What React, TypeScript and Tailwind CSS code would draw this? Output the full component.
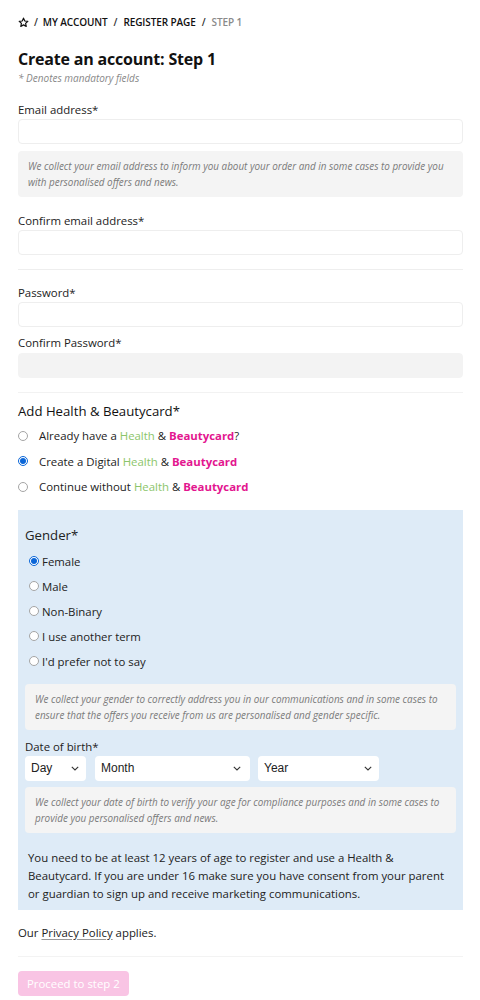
import React from "react";

const Star = () => (
  <svg width="11" height="11" viewBox="0 0 24 24" fill="none" stroke="#111" strokeWidth="2.6" strokeLinejoin="round">
    <path d="M12 2.5l2.9 6.2 6.6.7-4.9 4.5 1.4 6.6L12 17.2l-5.9 3.3 1.4-6.6-4.9-4.5 6.6-.7z" />
  </svg>
);

const Chevron = () => (
  <svg width="8" height="5" viewBox="0 0 8 5" fill="none" stroke="#333" strokeWidth="1.1">
    <path d="M0.8 0.8L4 4L7.2 0.8" />
  </svg>
);

const Info = ({ children, cls = "" }: { children: React.ReactNode; cls?: string }) => (
  <div className={`bg-[#f4f4f4] rounded-sm pl-[10px] pr-[8px] pt-[7px] pb-[7px] text-[9.9px] leading-[16px] italic text-[#7a7a7a] ${cls}`}>
    {children}
  </div>
);

const Input = ({ gray = false, cls = "" }: { gray?: boolean; cls?: string }) => (
  <div className={`h-[25px] rounded-sm border border-[#eeeeee] ${gray ? "bg-[#f3f3f3] border-[#f3f3f3]" : "bg-white"} ${cls}`} />
);

const HB = () => (
  <>
    <span className="text-[#8cc56a]">Health</span> &amp; <span className="font-bold text-[#e3168f]">Beautycard</span>
  </>
);

const Radio = ({ checked = false, cls = "" }: { checked?: boolean; cls?: string }) =>
  checked ? (
    <span className={`w-[10px] h-[10px] shrink-0 rounded-full border border-[#0a66d8] bg-white flex items-center justify-center ${cls}`}>
      <span className="w-[6px] h-[6px] rounded-full bg-[#0a66d8]" />
    </span>
  ) : (
    <span className={`w-[10px] h-[10px] shrink-0 rounded-full border border-[#a5a5a5] bg-white ${cls}`} />
  );

const Select = ({ label, w, chev }: { label: string; w: string; chev: string }) => (
  <div className={`h-[25px] bg-white rounded-sm flex items-center relative ${w}`} style={{ fontFamily: '"Liberation Sans", Arial, sans-serif' }}>
    <span className="pl-[6px] text-[12px] text-[#222]">{label}</span>
    <span className={`absolute top-[10px] ${chev}`}>
      <Chevron />
    </span>
  </div>
);

export default function App() {
  return (
    <div className="w-[480px] min-h-[1000px] bg-white pl-[18px] pr-[17px] pt-[15px] text-[#222]" style={{ fontFamily: '"Open Sans", "Noto Sans", sans-serif' }}>
      <div className="flex items-center h-[14px] text-[10px] font-semibold leading-[14px] tracking-[-0.1px]">
        <span className="mr-[5px]"><Star /></span>
        <span className="text-[#333] mr-[5px]">/</span>
        <span className="text-[#111] mr-[6px]">MY ACCOUNT</span>
        <span className="text-[#333] mr-[6px]">/</span>
        <span className="text-[#111] mr-[6px]">REGISTER PAGE</span>
        <span className="text-[#333] mr-[6px]">/</span>
        <span className="text-[#8a8a8a]">STEP 1</span>
      </div>

      <h1 className="mt-[18px] text-[16px] font-bold leading-[24px] tracking-[-0.2px] text-[#111]">Create an account: Step 1</h1>
      <div className="mt-[0px] text-[10px] italic leading-[14px] text-[#888]">* Denotes mandatory fields</div>

      <div className="mt-[16px] text-[11.4px] leading-[18px]">Email address*</div>
      <Input />
      <Info cls="mt-[7px]">
        We collect your email address to inform you about your order and in some cases to provide you with personalised offers and news.
      </Info>

      <div className="mt-[15px] text-[11.4px] leading-[18px]">Confirm email address*</div>
      <Input />
      <div className="mt-[14px] border-t border-[#eeeeee]" />

      <div className="mt-[14px] text-[11.4px] leading-[18px]">Password*</div>
      <Input />
      <div className="mt-[7px] text-[11.4px] leading-[18px]">Confirm Password*</div>
      <Input gray cls="mt-[1px]" />
      <div className="mt-[14px] border-t border-[#f2f2f2]" />

      <div className="mt-[8px] text-[13.2px] font-medium leading-[20px] text-[#111]">Add Health &amp; Beautycard*</div>
      <div className="mt-[2px] flex flex-col text-[11.4px] leading-[25.5px]">
        <label className="flex items-center">
          <Radio />
          <span className="ml-[11px]">Already have a <HB />?</span>
        </label>
        <label className="flex items-center">
          <Radio checked />
          <span className="ml-[11px]">Create a Digital <HB /></span>
        </label>
        <label className="flex items-center">
          <Radio />
          <span className="ml-[11px]">Continue without <HB /></span>
        </label>
      </div>

      <div className="mt-[10px] bg-[#deebf7] px-[7px] pt-[15px] pb-[7px]">
        <div className="text-[13.2px] leading-[20px] text-[#222]">Gender*</div>
        <div className="mt-[4px] flex flex-col text-[11.4px] leading-[25px]">
          {["Female", "Male", "Non-Binary", "I use another term", "I'd prefer not to say"].map((g, i) => (
            <label key={g} className="flex items-center">
              <Radio checked={i === 0} cls="ml-[4px]" />
              <span className="ml-[3px]">{g}</span>
            </label>
          ))}
        </div>
        <Info cls="mt-[10px]">
          We collect your gender to correctly address you in our communications and in some cases to ensure that the offers you receive from us are personalised and gender specific.
        </Info>
        <div className="mt-[8px] text-[11.4px] leading-[18px]">Date of birth*</div>
        <div className="flex gap-[8px]">
          <Select label="Day" w="w-[61px]" chev="left-[46px]" />
          <Select label="Month" w="w-[155px] ml-[1px]" chev="left-[138px]" />
          <Select label="Year" w="w-[121px]" chev="left-[106px]" />
        </div>
        <Info cls="mt-[6px]">
          We collect your date of birth to verify your age for compliance purposes and in some cases to provide you personalised offers and news.
        </Info>
        <p className="mt-[16px] pl-[3px] pr-[10px] text-[11.4px] leading-[18px] text-[#222]">
          You need to be at least 12 years of age to register and use a Health &amp; Beautycard. If you are under 16 make sure you have consent from your parent or guardian to sign up and receive marketing communications.
        </p>
      </div>

      <div className="mt-[14px] text-[11.4px] leading-[18px]">
        Our <span className="underline decoration-[#999] underline-offset-2">Privacy Policy</span> applies.
      </div>
      <div className="mt-[14px] border-t border-[#f3f3f3]" />
      <button className="mt-[14px] h-[25px] px-[9px] rounded-sm bg-[#f9c4e4] text-white text-[11.4px] leading-[25px]">
        Proceed to step 2
      </button>
    </div>
  );
}
